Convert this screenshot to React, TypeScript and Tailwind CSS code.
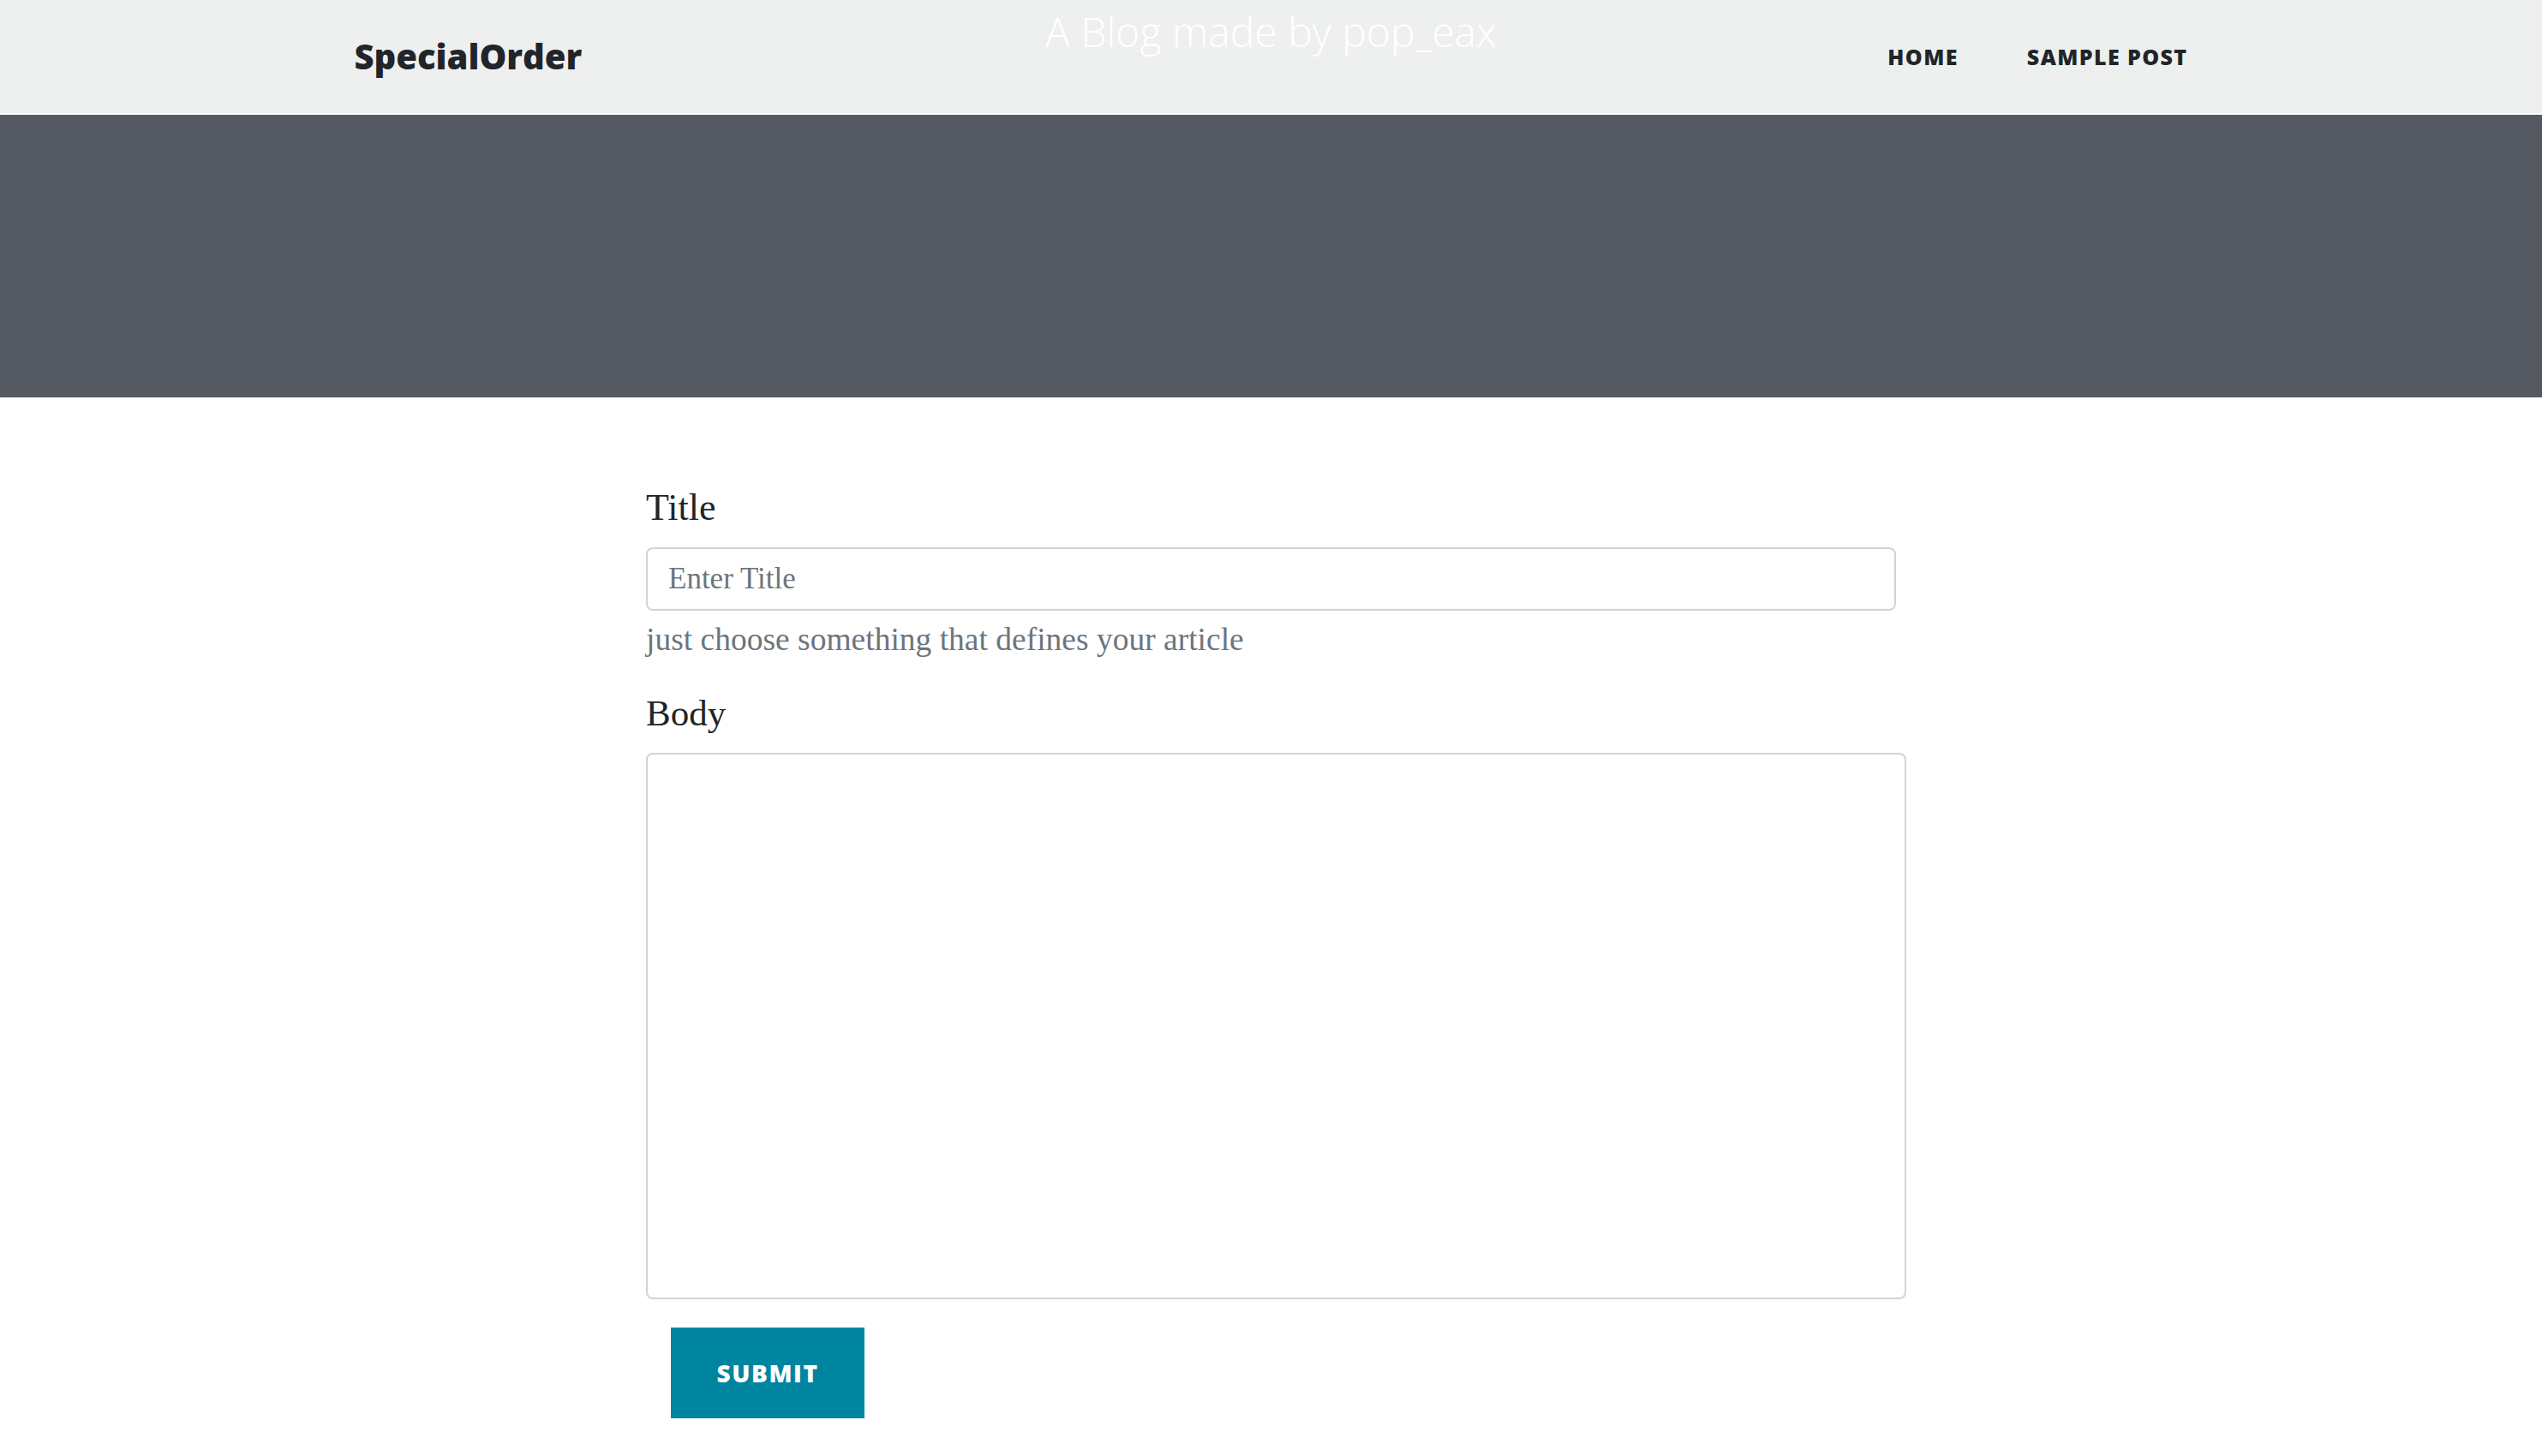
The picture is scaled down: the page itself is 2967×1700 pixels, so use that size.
import React from 'react';

const navLinks = ['Home', 'Sample Post'];

function Header() {
  return (
    <header className="h-[134px] bg-[#eef0ef] border-b-2 border-white">
      <div className="mx-auto w-[2140px] h-full grid grid-cols-[1fr_auto_1fr]">
        <a href="#" className="self-center justify-self-start font-['Open_Sans',sans-serif] font-extrabold text-[40px] leading-none text-[#212529]">
          SpecialOrder
        </a>
        <h1 className="self-start pt-[13px] font-['Open_Sans',sans-serif] font-light text-[48px] leading-[48px] text-white">
          A Blog made by pop_eax
        </h1>
        <nav className="self-center justify-self-end flex items-center gap-[80px]">
          {navLinks.map((l) => (
            <a key={l} href="#" className="font-['Open_Sans',sans-serif] font-extrabold text-[25px] leading-none tracking-[1.4px] uppercase text-[#212529]">
              {l}
            </a>
          ))}
        </nav>
      </div>
    </header>
  );
}

export default function App() {
  return (
    <div className="min-h-screen bg-white">
      <Header />
      <section className="h-[330px] bg-[#555a62]" />
      <main className="mx-auto w-[1459px] pt-[107px] pb-[42px] font-['Liberation_Serif',serif]">
        <form onSubmit={(e) => e.preventDefault()} className="flex flex-col">
          <label className="text-[44px] leading-[44px] text-[#212529]">Title</label>
          <input
            type="text"
            placeholder="Enter Title"
            className="mt-[24px] h-[74px] w-full rounded-[8px] border-2 border-[#ced4da] px-[24px] text-[35px] text-[#495057] placeholder:text-[#6c757d] outline-none"
          />
          <p className="mt-[15px] text-[37.5px] leading-[38px] text-[#6c757d]">just choose something that defines your article</p>
          <label className="mt-[45px] text-[43px] leading-[44px] text-[#212529]">Body</label>
          <textarea className="mt-[24px] h-[638px] w-[1471px] rounded-[8px] border-2 border-[#ced4da] p-[24px] text-[35px] outline-none resize-none" />
          <div className="mt-[33px] pl-[29px]">
            <button type="submit" className="flex items-center justify-center w-[226px] h-[106px] bg-[#0085a1] font-['Open_Sans',sans-serif] font-extrabold text-[28px] leading-none tracking-[1.6px] uppercase text-white">
              Submit
            </button>
          </div>
        </form>
      </main>
    </div>
  );
}
